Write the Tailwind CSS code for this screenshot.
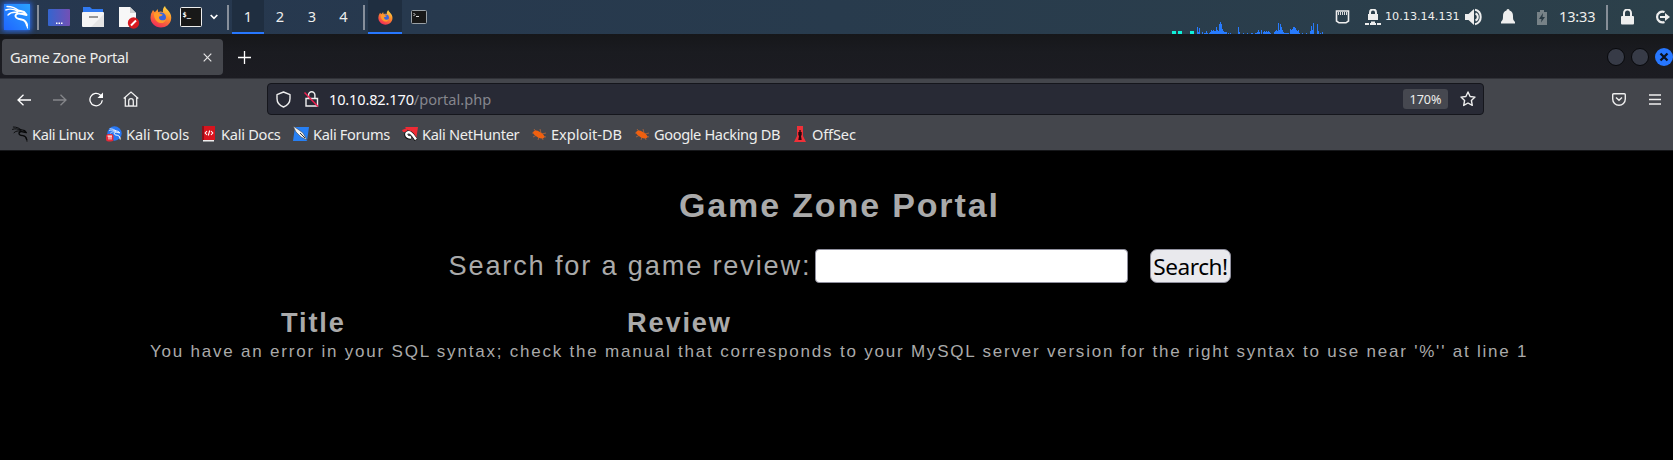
<!DOCTYPE html>
<html lang="en">
<head>
<meta charset="utf-8">
<title>Game Zone Portal</title>
<script src="https://cdn.jsdelivr.net/npm/@tailwindcss/browser@4"></script>
</head>
<body class="w-[1673px] h-[460px] overflow-hidden bg-black font-['Noto_Sans',sans-serif] text-[#eeeeec] whitespace-nowrap">
<svg width="0" height="0" class="absolute">
  <defs>
    <linearGradient id="fx" x1=".8" y1="0" x2=".3" y2="1"><stop offset="0" stop-color="#ffe14a"/><stop offset=".45" stop-color="#ff8a2a"/><stop offset="1" stop-color="#f0285a"/></linearGradient>
    <linearGradient id="desk" x1="0" y1="0" x2="1" y2="0"><stop offset="0" stop-color="#3465cf"/><stop offset="1" stop-color="#7350b5"/></linearGradient>
    <linearGradient id="kl" x1="0" y1="1" x2="1" y2="0"><stop offset="0" stop-color="#1f66ff"/><stop offset="1" stop-color="#2aa2ff"/></linearGradient>
    <symbol id="firefox" viewBox="0 0 22 22">
      <path fill="url(#fx)" d="M1 8 3 4l1.500 2L6 5.300 7.500 3l.8 3.200C10 5.200 11.500 5.500 13 6c-.5-2 .3-4.500 2-6 .3 2 2.500 3.500 4 5.500 2 2.500 2.700 5.500 2 8.500C20 18.500 16 21.500 11 21.500 5 21.500.5 17 .5 11.500z"/>
      <circle cx="11.300" cy="11.200" r="4.700" fill="#3b64dc"/>
      <path fill="#ff9a2a" d="M4 7.500c2.500-1.600 5-.8 6.500.4l2.200.5c-.5 1.600-2.200 1.500-3.500 2-.8 1.300.2 3.200 2.300 3.800 2 .4 3.600-.4 4.600-1.300-.5 3-3 4.400-5.600 4.100C6.500 16.500 3.500 12 4 7.500z"/>
    </symbol>
    <symbol id="dragon" viewBox="0 0 24 24">
      <path fill="none" stroke="currentColor" stroke-linecap="round" stroke-width="1.400" d="M2 1.500C7 1.500 11 3 14 6M.8 5C5 3.500 9 4 13 6.500M3 10c2.500-2.500 6-3 9.500-2.500"/>
      <path fill="none" stroke="currentColor" stroke-linecap="round" stroke-linejoin="round" stroke-width="2" d="M12 5.500c3 .3 5 .8 7 1.500l2.500 3-4-1c-3-.8-6.500-.8-7 1.500-.4 3 3 3.600 6 4 3.500.6 5 2.500 5.500 6"/>
      <path fill="none" stroke="currentColor" stroke-linecap="round" stroke-width="1.200" d="M20.500 17c1.500 1.500 2 4 2 6"/>
    </symbol>
    <symbol id="bug" viewBox="0 0 16 13">
      <path fill="none" stroke="#c86a35" stroke-width=".7" d="M1 5h4M3 1l3 4M2 9l4-2M7 12l1-3M12 12l-1-4M15 9l-4-1M9 1l1 4M15 5l-4 1"/>
      <path fill="#f0600f" d="M2 4.500C3 2 6 2.200 8 3.500c3 1.300 5.500 3.500 5.500 6C11 11.500 7 10 5 8 3.500 7 2.200 6 2 4.500z"/>
    </symbol>
  </defs>
</svg>

<!-- desktop panel -->
<header class="flex h-[34px] bg-linear-to-r from-[#26374f] via-[#283b4d] to-[#2c404a]">
  <div class="flex h-[34px] w-[232px] items-center pl-[4px]">
    <div class="flex size-[26px] items-center justify-center bg-[#2380ff] shadow-[0_0_5px_1px_#2a6cf0]">
      <svg width="26" height="26" viewBox="0 0 26 26" class="text-white"><path fill="url(#kl)" d="M0 0h26v26H0z"/><use href="#dragon" x="1" y="1" width="24" height="24"/></svg>
    </div>
    <i class="ml-[7px] h-[25px] w-[2px] bg-[#878f9b]"></i>
    <svg class="ml-[9px]" width="22" height="17"><rect width="22" height="17" rx="1" fill="url(#desk)"/><path stroke="#fff" stroke-width="1.400" d="M8 14.300h1.500m1 0H12m1 0h1.500"/></svg>
    <svg class="ml-[12px]" width="22" height="20"><path fill="#3079f0" d="M1 0h7l2 2h11v8H1z"/><rect y="5" width="22" height="15" rx="1" fill="#f5f5f5"/><path fill="#e5e5e5" d="M22 7v13H9z"/><path stroke="#777" stroke-width="1.500" d="M7 10h9"/></svg>
    <svg class="ml-[15px]" width="21" height="23"><path fill="#f7f7f7" d="M0 1h11l6 6v14H0z"/><path fill="#d0d0d0" d="m11 1 6 6h-6z"/><circle cx="14.500" cy="17" r="5.700" fill="#d71920"/><path stroke="#fff" stroke-width="2" d="m12 19.500 5-5"/></svg>
    <svg class="ml-[10px]" width="22" height="22"><use href="#firefox"/></svg>
    <svg class="ml-[8px]" width="22" height="20"><rect x=".5" y=".5" width="21" height="19" rx="1" fill="#181818" stroke="#eee"/><text x="2.500" y="9.500" font-size="7" font-weight="700" font-family="DejaVu Sans Mono" fill="#fff">$_</text></svg>
    <svg class="ml-[8px]" width="8" height="6"><path d="m.7 1 3.300 3.300L7.300 1" fill="none" stroke="#fff" stroke-width="1.700"/></svg>
    <i class="ml-[9px] h-[25px] w-[2px] bg-[#878f9b]"></i>
  </div>
  <nav class="flex w-[136px] text-center text-[14.6px] leading-[33px]">
    <span class="h-[34px] w-[32px] border-b-2 border-[#2777ff] bg-[#1f2e40]">1</span><span class="w-[32px]">2</span><span class="w-[32px]">3</span><span class="w-[31px]">4</span><i class="mt-[5px] ml-[4px] h-[25px] w-[2px] bg-[#878f9b]"></i>
  </nav>
  <div class="flex h-[34px] w-[34px] items-center justify-center border-b-2 border-[#2777ff] bg-[#1f2e40] pt-[2px]"><svg width="15" height="15"><use href="#firefox"/></svg></div>
  <svg class="mt-[10px] ml-[9px]" width="16" height="14"><rect x=".5" y=".5" width="15" height="13" rx="1" fill="#181818" stroke="#99a0a6"/><path d="m2.500 3 1.500 1.500L2.500 6M5 6.500h3" fill="none" stroke="#ddd"/></svg>
  <svg class="mt-[19px] ml-[745px]" width="155" height="15">
    <path fill="#10f0da" d="M0 12h4v3H0zm6 0h4v3H6zm12 0h4v3h-4z"/>
    <path stroke="#277bff" d="M25.500 15V8m1 7v-2m1 2V9m3 6v-2m2 2v-1m1 1v-1m1 1v-3m1 3v-1m2 1v-1m1 1v-2m1 2v-4m1 4v-3m1 3v-4m1 4v-3m1 3v-3m1 3V8m1 7v-4m1 4v-3m1 3V5m1 10V3m1 12V5m1 10v-5m1 5v-3m1 3v-2m1 2v-2m1 2v-2m2 2v-1m2 1v-1m8 1V8m1 7v-2m4 2v-1m4 1v-1m4 1v-1m1 1v-1m3 1v-1m1 1v-1m1 1v-2m1 2v-4m1 4v-2m2 2v-4m2 4v-2m1 2v-3m1 3v-2m1 2v-3m1 3v-2m1 2v-3m1 3v-2m1 2v-1m4 1v-2m1 2v-3m1 3v-4m1 4v-3m1 3V4m1 11v-4m1 4V5m1 10V8m1 7v-4m1 4v-2m1 2v-1m1 1v-1m1 1v-1m1 1v-1m1 1v-1m2 1v-5m1 5v-4m1 4v-5m1 5V8m1 7V8m1 7V9m1 6v-4m1 4v-3m1 3v-4m1 4v-1m3 1v-1m4 1v-1m4 1v-3m1 3V7m1 8v-4m1 4V4m4 11V5m1 10v-3m2 3v-1m2 1v-2"/>
  </svg>
  <div class="flex h-[34px] w-[346px] items-center pl-[8px]">
    <svg class="-mt-px" width="15" height="14"><path fill="none" stroke="#eee" stroke-width="1.600" d="M1.500 1h12v10l-2.500 1.800H4L1.500 11z"/><path stroke="#ddd" stroke-width="1" d="M3.500 2v3m2-3v3m2-3v3m2-3v3m2-3v3"/></svg>
    <svg class="ml-[15px]" width="16" height="17"><path fill="none" stroke="#eee" stroke-width="2" d="M5 6V3.500a3 3 0 0 1 6 0V6"/><path fill="#eee" d="M3 5h10v6H3zM0 14h4v2H0zm5 0h1v-1.500h4V14h1v2H5zm7 0h4v2h-4z"/></svg>
    <span class="ml-[4px] mt-[-1px] w-[80px] text-[11.2px] leading-[34px] font-['DejaVu_Sans']">10.13.14.131</span>
    <svg class="shrink-0" width="18" height="18"><path fill="#eee" d="M0 6h3.500L9 1v16l-5.500-5H0z"/><path fill="none" stroke="#eee" stroke-width="2" d="M10.500 5.500a3.800 3.800 0 0 1 0 7M10 1.800a7.400 7.400 0 0 1 0 14.400"/></svg>
    <svg class="ml-[18px] shrink-0 -mt-px" width="14" height="16"><path fill="#eee" d="M7 0c1 0 1.500.8 1.500 1.600C11 2.300 12 4.500 12 7c0 4 .5 4 2 6v1.500H0V13c1.500-2 2-2 2-6 0-2.500 1-4.700 3.500-5.400C5.500.8 6 0 7 0z"/></svg>
    <svg class="ml-[22px] shrink-0" width="10" height="15"><path fill="#778287" d="M3 0h4v2h3v13H0V2h3z"/><path fill="#2a3b45" d="M6 3 2 9h2.500L4 12.500 8 7H5.500z"/></svg>
    <span class="ml-[12px] mt-[-2px] w-[47px] shrink-0 text-[14.600px] leading-[34px] tracking-[-0.2px]">13:33</span>
    <i class="h-[25px] w-[2px] shrink-0 bg-[#878f98]"></i>
    <svg class="ml-[13px] shrink-0" width="13" height="16"><path fill="none" stroke="#eee" stroke-width="2" d="M3 8V4a3.500 3.500 0 0 1 7 0v4"/><rect y="7" width="13" height="8.500" rx="1" fill="#eee"/></svg>
    <svg class="ml-[21px] shrink-0" width="15" height="14"><path fill="none" stroke="#eee" stroke-width="2.200" d="M9.500 2A5.400 5.400 0 1 0 9.500 12"/><path fill="#eee" d="M5 6h5V3l5 4-5 4V8H5z"/></svg>
  </div>
</header>

<!-- browser tab strip -->
<div class="flex h-[44px] items-center bg-linear-to-b from-[#16171a] via-[#1a1b20] via-40% to-[#1c1c22] pl-[2px]">
  <div class="flex h-[36px] w-[221px] items-center rounded-[4px] bg-[#45474d] pl-[8px] mt-[2px]">
    <span class="w-[193px] pt-[2px] text-[14.600px] tracking-[-0.33px]">Game Zone Portal</span>
    <svg width="9" height="9"><path d="m.7.7 7.600 7.600m0-7.600L.7 8.300" stroke="#e5e5e5" stroke-width="1.200"/></svg>
  </div>
  <svg class="ml-[15px] mt-[3px]" width="13" height="13"><path d="M6.500 0v13M0 6.500h13" stroke="#fff" stroke-width="1.300"/></svg>
  <svg class="ml-[1356px] mt-[2px] shrink-0" width="66" height="20"><g fill="#373b47" stroke="#08090c"><circle cx="9" cy="10" r="8.500"/><circle cx="33" cy="10" r="8.500"/></g><circle cx="57" cy="10" r="9" fill="#2777ff"/><path d="m53.500 6.500 7 7m0-7-7 7" stroke="#0b1220" stroke-width="2.300"/></svg>
</div>

<!-- navigation and bookmarks -->
<div class="h-[73px] border-y border-t-[#303137] border-b-[#16171a] bg-[#44464c]">
  <div class="flex h-[41px] items-center">
    <svg class="ml-[17px]" width="14" height="12"><path d="M14 6H1M6.500.7 1 6l5.500 5.300" fill="none" stroke="#fff" stroke-width="1.300"/></svg>
    <svg class="ml-[22px]" width="14" height="12"><path d="M0 6h13M7.500.7 13 6l-5.500 5.300" fill="none" stroke="#85868a" stroke-width="1.300"/></svg>
    <svg class="ml-[22px]" width="15" height="15"><path d="M13.300 8.300a6.200 6.200 0 1 1-2-5.300l1.200 1.200" fill="none" stroke="#fff" stroke-width="1.300"/><path fill="#fff" d="M14 .5V6H8.500z"/></svg>
    <svg class="ml-[19px] -mt-px" width="16" height="16"><path d="M.7 7.500 8 1l7.300 6.500M2.300 6.500v8.600h3.400V10a2.300 2.300 0 0 1 4.600 0v5.100h3.400V6.500M5.700 15h4.600" fill="none" stroke="#eee" stroke-width="1.300"/></svg>
    <div class="ml-[128px] flex h-[32px] w-[1217px] items-center rounded-[4px] border border-[#15161c] bg-[#282a35] mt-[-1px]">
      <svg class="ml-[8px]" width="15" height="17"><path d="M7.500 1 14 3.700v3.800c0 4-2.500 7-6.500 8.500C3.500 14.500 1 11.500 1 7.500V3.700z" fill="none" stroke="#eee" stroke-width="1.400" stroke-linejoin="round"/></svg>
      <svg class="ml-[13px]" width="15" height="16"><path d="M4.500 7V4a3.200 3.200 0 0 1 6.400 0v3M2 7.500h11.500V15H2z" fill="none" stroke="#eee" stroke-width="1.400"/><path d="m.5 1.500 13.500 14" stroke="#f02050" stroke-width="1.500"/></svg>
      <div class="ml-[10px] w-[1073px] text-[14.600px] leading-[30px] text-[#85868d]"><span class="tracking-[-0.17px] text-[#fbfbfe]">10.10.82.170</span>/portal.php</div>
      <span class="ml-[1px] h-[20px] w-[45px] rounded-[3px] bg-[#464850] text-center text-[12.600px] leading-[21px]">170%</span>
      <svg class="ml-[12px]" width="16" height="16"><path d="m8 1 2.100 4.500 4.900.6-3.600 3.400.9 4.900L8 12l-4.300 2.400.9-4.900L1 6.100l4.900-.6z" fill="none" stroke="#eee" stroke-width="1.400" stroke-linejoin="round"/></svg>
    </div>
    <svg class="ml-[128px]" width="14" height="13"><path d="M1.700.7h10.600q1 0 1 1V6a6.300 6.300 0 0 1-12.600 0V1.700q0-1 1-1zM4 4.500l3 2.800 3-2.800" fill="none" stroke="#eee" stroke-width="1.400"/></svg>
    <svg class="ml-[23px] mt-[-1px]" width="12" height="11"><path d="M0 1h12M0 5.500h12M0 10h12" stroke="#eee" stroke-width="1.300"/></svg>
  </div>
  <div class="flex h-[29px] items-center pl-[12px] pb-[1px] text-[14.600px] leading-[28px]">
    <div class="flex w-[94px] items-center gap-[4px] tracking-[-0.4px]"><svg class="shrink-0 text-[#08090a]" width="16" height="16"><use href="#dragon"/></svg>Kali Linux</div>
    <div class="flex w-[96px] items-center gap-[4px] tracking-[-0.1px]"><svg class="shrink-0 text-white" width="16" height="16"><circle cx="8.500" cy="7.500" r="7.200" fill="#2777f5"/><use href="#dragon" x="3" y="2" width="12" height="12"/><rect y="8" width="7.500" height="7.500" rx="2.500" fill="#e52a38"/><path d="M1.500 10h4.500M3 10v3.500m2-3.500v3.500" stroke="#fff"/></svg>Kali Tools</div>
    <div class="flex w-[91px] items-center gap-[6px] tracking-[-0.27px]"><svg class="shrink-0" width="13" height="16"><path fill="#d8141e" d="M0 0h13v14H0z"/><path fill="#8c1018" d="M0 0h2v14H0z"/><path fill="#eee" d="M1 14h11v1.500H1z"/><path d="M5 5 3.200 7 5 9m4-4 1.800 2L9 9M7.700 4.500l-1.400 5" fill="none" stroke="#fff" stroke-width="1.100"/></svg>Kali Docs</div>
    <div class="flex w-[109px] items-center gap-[4px] tracking-[-0.34px]"><svg class="shrink-0" width="16" height="16"><path fill="#2780f5" d="M2 1h14l-2 14H0z"/><path fill="#f4f4f4" stroke="#333" stroke-width=".5" d="m0 0 6 4 4 3 4 7-6-3-5-5z"/><path stroke="#333" d="m7 7 5 5"/></svg>Kali Forums</div>
    <div class="flex w-[129px] items-center gap-[4px] tracking-[-0.3px]"><svg class="shrink-0" width="16" height="16"><path fill="#ef2b35" d="M3 1h13l-2 13z"/><path fill="#ef2b35" d="m0 4 5-2v4H1z"/><path d="M9 12C3 12 2.500 6.500 6.500 6.200c3-.2 5 3.800 7.500 8" fill="none" stroke="#111" stroke-width="3.600"/><path d="M9 11.500C3.500 11.500 3 6.500 6.500 6.200c3-.2 5 3.800 7.500 7.300" fill="none" stroke="#fff" stroke-width="2.400"/></svg>Kali NetHunter</div>
    <div class="flex w-[103px] items-center gap-[4px] tracking-[-0.02px]"><svg class="shrink-0" width="16" height="13"><use href="#bug"/></svg>Exploit-DB</div>
    <div class="flex w-[160px] items-center gap-[4px] tracking-[-0.38px]"><svg class="shrink-0" width="16" height="13"><use href="#bug"/></svg>Google Hacking DB</div>
    <div class="flex items-center gap-[6px] tracking-[-0.15px]"><svg class="shrink-0" width="12" height="16"><path fill="#f03038" d="M3 0h6v10l3 6H0l3-6z"/><path fill="#25090c" d="M5.300 4h1.400v2h1v3l-.7 1 .7 4H4.300L5 10l-.7-1V6h1z"/></svg>OffSec</div>
  </div>
</div>

<!-- page -->
<main class="flex h-[309px] flex-col font-['Liberation_Sans',sans-serif] text-[#aaa]">
  <h1 class="mt-[34px] pl-[679px] text-[34px] leading-[40px] font-bold tracking-[1.86px]">Game Zone Portal</h1>
  <form class="mt-[24px] flex h-[34px] pl-[448.500px]">
    <label class="w-[366.500px] text-[27.200px] leading-[34px] tracking-[1.820px]">Search for a game review:</label>
    <input class="h-[34px] w-[313px] rounded-[4px] border border-[#8f8f9d] bg-white">
    <button type="button" class="ml-[22px] h-[34px] w-[81px] rounded-[7px] border border-[#8f8f9d] bg-[#e9e9ed] font-['Noto_Sans',sans-serif] text-[22.600px] leading-[34px] tracking-[-0.45px] text-black">Search!</button>
  </form>
  <div class="mt-[24px] flex pl-[281px] text-[27.200px] leading-[31px] font-bold tracking-[1.860px]"><span class="w-[346px]">Title</span><span>Review</span></div>
  <p class="mt-[4px] pl-[150px] text-[17px] leading-[20px] tracking-[1.79px]">You have an error in your SQL syntax; check the manual that corresponds to your MySQL server version for the right syntax to use near '%'' at line 1</p>
</main>
</body>
</html>
